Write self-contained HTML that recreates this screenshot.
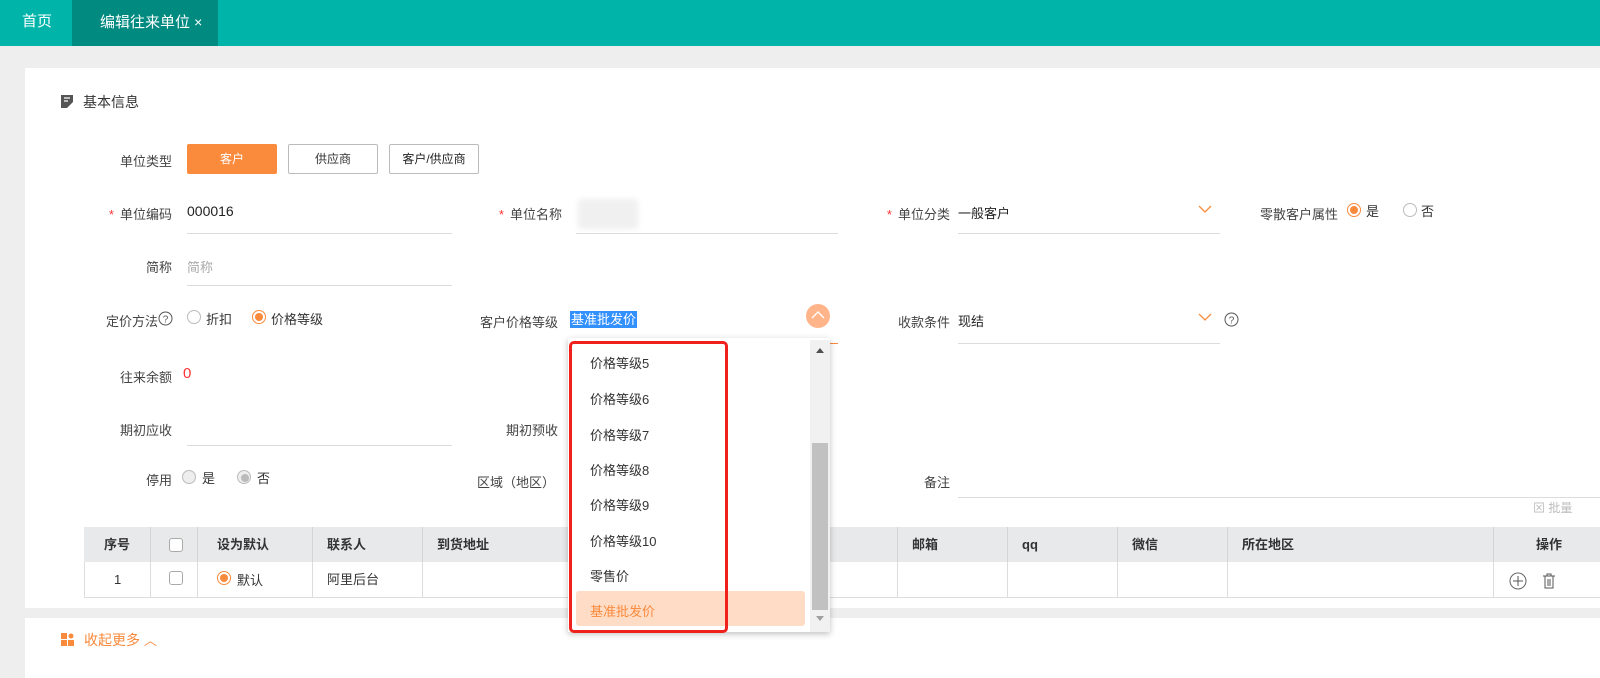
<!DOCTYPE html>
<html><head><meta charset="utf-8"><style>
*{box-sizing:border-box;margin:0;padding:0}
body{width:1600px;height:673px;overflow:hidden;background:#eeeeee;font-family:"Liberation Sans","Noto Sans CJK SC",sans-serif;font-size:13px;color:#333;position:relative}
.a{position:absolute}
.top{left:0;top:0;width:1600px;height:46px;background:#00b4aa}
.lbl{position:absolute;text-align:right;color:#444;font-size:13px}
.line{position:absolute;height:1px;background:#dcdcdc}
.req{color:#f33;margin-right:6px}
.radio{position:absolute;width:14px;height:14px;border:1px solid #bbb;border-radius:50%;background:#fff}
.radio.on{border-color:#fa8a3c}
.radio.on:after{content:"";position:absolute;left:2px;top:2px;width:8px;height:8px;border-radius:50%;background:#fa8a3c}
.th{position:absolute;top:527px;height:35px;line-height:35px;font-weight:bold;color:#333;border-right:1px solid #d5d5d5;padding-left:14px}
.td{position:absolute;top:562px;height:35px;line-height:35px;border-right:1px solid #ddd;padding-left:14px}
.cb{position:absolute;width:14px;height:14px;border:1px solid #aaa;border-radius:3px;background:#fff}
.item{position:absolute;left:590px;font-size:13px;color:#333}
</style></head><body>
<div class="a top"></div>
<div class="a" style="left:0;top:0;width:72px;height:46px;line-height:44px;color:#fff;font-size:15px;padding-left:22px">首页</div>
<div class="a" style="left:72px;top:0;width:146px;height:46px;background:#008a80;line-height:44px;color:#fff;font-size:15px;padding-left:28px">编辑往来单位 <span style="font-size:14px">×</span></div>

<div class="a" style="left:25px;top:68px;width:1575px;height:540px;background:#fff"></div>
<div class="a" style="left:25px;top:618px;width:1575px;height:60px;background:#fff"></div>

<svg class="a" style="left:61px;top:95px" width="12" height="13"><path d="M0 0h12v7l-6 6H0z" fill="#555"/><path d="M3 3h6M3 6h4" stroke="#fff" stroke-width="1.2"/></svg>
<div class="a" style="left:83px;top:92px;font-size:14px;color:#333">基本信息</div>

<div class="lbl" style="left:60px;width:112px;top:151px">单位类型</div>
<div class="a" style="left:187px;top:144px;width:90px;height:30px;background:#fa8a3c;border-radius:2px;color:#fff;text-align:center;line-height:30px;font-size:12px">客户</div>
<div class="a" style="left:288px;top:144px;width:90px;height:30px;border:1px solid #bbb;border-radius:2px;text-align:center;line-height:28px;font-size:12px;color:#333">供应商</div>
<div class="a" style="left:389px;top:144px;width:90px;height:30px;border:1px solid #bbb;border-radius:2px;text-align:center;line-height:28px;font-size:12px;color:#222">客户/供应商</div>

<div class="lbl" style="left:60px;width:112px;top:204px"><span class="req">*</span>单位编码</div>
<div class="a" style="left:187px;top:203px;font-size:14px;color:#222">000016</div>
<div class="line" style="left:187px;top:233px;width:265px"></div>
<div class="lbl" style="left:450px;width:112px;top:204px"><span class="req">*</span>单位名称</div>
<div class="a" style="left:578px;top:199px;width:60px;height:30px;background:#f0f0f0;filter:blur(3px)"></div>
<div class="line" style="left:576px;top:233px;width:262px"></div>
<div class="lbl" style="left:838px;width:112px;top:204px"><span class="req">*</span>单位分类</div>
<div class="a" style="left:958px;top:203px;color:#222">一般客户</div>
<svg class="a" style="left:1198px;top:205px" width="14" height="9"><path d="M1 1l6 6 6-6" stroke="#fa8a3c" fill="none" stroke-width="1.3"/></svg>
<div class="line" style="left:958px;top:233px;width:262px"></div>
<div class="lbl" style="left:1230px;width:108px;top:204px">零散客户属性</div>
<div class="radio on" style="left:1347px;top:203px"></div><div class="a" style="left:1366px;top:201px">是</div>
<div class="radio" style="left:1403px;top:203px"></div><div class="a" style="left:1421px;top:201px">否</div>

<div class="lbl" style="left:60px;width:112px;top:257px">简称</div>
<div class="a" style="left:187px;top:257px;color:#aaa">简称</div>
<div class="line" style="left:187px;top:285px;width:265px"></div>

<div class="lbl" style="left:60px;width:98px;top:311px">定价方法</div>
<svg class="a" style="left:158px;top:311px" width="15" height="15"><circle cx="7.5" cy="7.5" r="6.5" fill="none" stroke="#555"/><text x="7.5" y="11.5" font-size="10" text-anchor="middle" fill="#555">?</text></svg>
<div class="radio" style="left:187px;top:310px"></div><div class="a" style="left:206px;top:309px">折扣</div>
<div class="radio on" style="left:252px;top:310px"></div><div class="a" style="left:271px;top:309px">价格等级</div>
<div class="lbl" style="left:450px;width:108px;top:312px">客户价格等级</div>
<div class="a" style="left:570px;top:311px;background:#3390ff;color:#fff;padding:0 1px;line-height:17px">基准批发价</div>
<div class="a" style="left:806px;top:304px;width:24px;height:24px;border-radius:50%;background:#ffb48a"></div>
<svg class="a" style="left:811px;top:311px" width="14" height="9"><path d="M1 7l6-6 6 6" stroke="#fff" fill="none" stroke-width="1.4"/></svg>
<div class="a" style="left:576px;top:343px;width:262px;height:1px;background:#fa8a3c"></div>
<div class="lbl" style="left:838px;width:112px;top:312px">收款条件</div>
<div class="a" style="left:958px;top:311px;color:#222">现结</div>
<svg class="a" style="left:1198px;top:313px" width="14" height="9"><path d="M1 1l6 6 6-6" stroke="#fa8a3c" fill="none" stroke-width="1.3"/></svg>
<div class="line" style="left:958px;top:343px;width:262px"></div>
<svg class="a" style="left:1224px;top:312px" width="15" height="15"><circle cx="7.5" cy="7.5" r="6.5" fill="none" stroke="#555"/><text x="7.5" y="11.5" font-size="10" text-anchor="middle" fill="#555">?</text></svg>

<div class="lbl" style="left:60px;width:112px;top:367px">往来余额</div>
<div class="a" style="left:183px;top:365px;color:#f33;font-size:15px">0</div>

<div class="lbl" style="left:60px;width:112px;top:420px">期初应收</div>
<div class="line" style="left:187px;top:445px;width:265px"></div>
<div class="lbl" style="left:450px;width:108px;top:420px">期初预收</div>

<div class="lbl" style="left:60px;width:112px;top:470px">停用</div>
<div class="radio" style="left:182px;top:470px;background:#eee"></div><div class="a" style="left:202px;top:468px">是</div>
<div class="radio" style="left:237px;top:470px;background:#eee"></div><div class="a" style="left:241px;top:474px;width:8px;height:8px;border-radius:50%;background:#bbb"></div><div class="a" style="left:257px;top:468px">否</div>
<div class="lbl" style="left:450px;width:105px;top:472px">区域（地区）</div>
<div class="lbl" style="left:838px;width:112px;top:472px">备注</div>
<div class="line" style="left:958px;top:497px;width:642px"></div>
<div class="a" style="left:1533px;top:499px;color:#bbb;font-size:12px">⊠ 批量</div>

<!-- table -->
<div class="a" style="left:84px;top:527px;width:1516px;height:35px;background:#e8e9eb"></div>
<div class="a" style="left:84px;top:597px;width:1516px;height:1px;background:#ddd"></div>
<div class="a" style="left:84px;top:562px;width:1px;height:35px;background:#ddd"></div>
<div class="th" style="left:84px;width:67px;padding-left:20px">序号</div>
<div class="th" style="left:151px;width:47px"></div><div class="cb" style="left:169px;top:538px"></div>
<div class="th" style="left:198px;width:115px;padding-left:19px">设为默认</div>
<div class="th" style="left:313px;width:110px">联系人</div>
<div class="th" style="left:423px;width:475px">到货地址</div>
<div class="th" style="left:898px;width:110px">邮箱</div>
<div class="th" style="left:1008px;width:110px">qq</div>
<div class="th" style="left:1118px;width:110px">微信</div>
<div class="th" style="left:1228px;width:266px">所在地区</div>
<div class="th" style="left:1494px;width:106px;padding-left:42px;border:none">操作</div>
<div class="td" style="left:84px;width:67px;padding-left:30px">1</div>
<div class="td" style="left:151px;width:47px"></div><div class="cb" style="left:169px;top:571px"></div>
<div class="td" style="left:198px;width:115px"></div><div class="radio on" style="left:217px;top:571px"></div><div class="a" style="left:237px;top:570px">默认</div>
<div class="td" style="left:313px;width:110px">阿里后台</div>
<div class="td" style="left:423px;width:475px"></div>
<div class="td" style="left:898px;width:110px"></div>
<div class="td" style="left:1008px;width:110px"></div>
<div class="td" style="left:1118px;width:110px"></div>
<div class="td" style="left:1228px;width:266px"></div>
<svg class="a" style="left:1509px;top:572px" width="18" height="18"><circle cx="9" cy="9" r="8" fill="none" stroke="#666"/><path d="M9 4v10M4 9h10" stroke="#555"/></svg>
<svg class="a" style="left:1542px;top:573px" width="14" height="16"><path d="M1 3h12M5 3V1h4v2M3 3v12h8V3M6 6v7M8 6v7" stroke="#555" fill="none"/></svg>

<svg class="a" style="left:61px;top:633px" width="13" height="13"><rect x="0" y="0" width="6" height="6" fill="#fa8a3c"/><rect x="0" y="7" width="6" height="6" fill="#fa8a3c"/><rect x="7" y="7" width="6" height="6" fill="#fa8a3c"/><circle cx="10" cy="3" r="2.5" fill="#fa8a3c"/></svg>
<div class="a" style="left:84px;top:630px;color:#fa8a3c;font-size:14px">收起更多 <span style="font-size:13px">︿</span></div>

<!-- dropdown -->
<div class="a" style="left:568px;top:338px;width:262px;height:294px;background:#fff;box-shadow:0 2px 6px rgba(0,0,0,.25)"></div>
<div class="a" style="left:810px;top:340px;width:20px;height:292px;background:#f1f1f1"></div>
<div class="a" style="left:812px;top:443px;width:16px;height:167px;background:#c1c1c1"></div>
<svg class="a" style="left:814px;top:346px" width="12" height="8"><path d="M2 7l4-5 4 5z" fill="#505050"/></svg>
<svg class="a" style="left:814px;top:615px" width="12" height="8"><path d="M2 1l4 5 4-5z" fill="#a0a0a0"/></svg>
<div class="item" style="top:353px">价格等级5</div>
<div class="item" style="top:389px">价格等级6</div>
<div class="item" style="top:425px">价格等级7</div>
<div class="item" style="top:460px">价格等级8</div>
<div class="item" style="top:495px">价格等级9</div>
<div class="item" style="top:531px">价格等级10</div>
<div class="item" style="top:566px">零售价</div>
<div class="a" style="left:576px;top:591px;width:229px;height:35px;background:#ffdcc6;border-radius:3px"></div>
<div class="item" style="top:601px;color:#fa8a3c">基准批发价</div>
<div class="a" style="left:569px;top:341px;width:159px;height:292px;border:3px solid #f0201c;border-radius:5px"></div>
</body></html>
